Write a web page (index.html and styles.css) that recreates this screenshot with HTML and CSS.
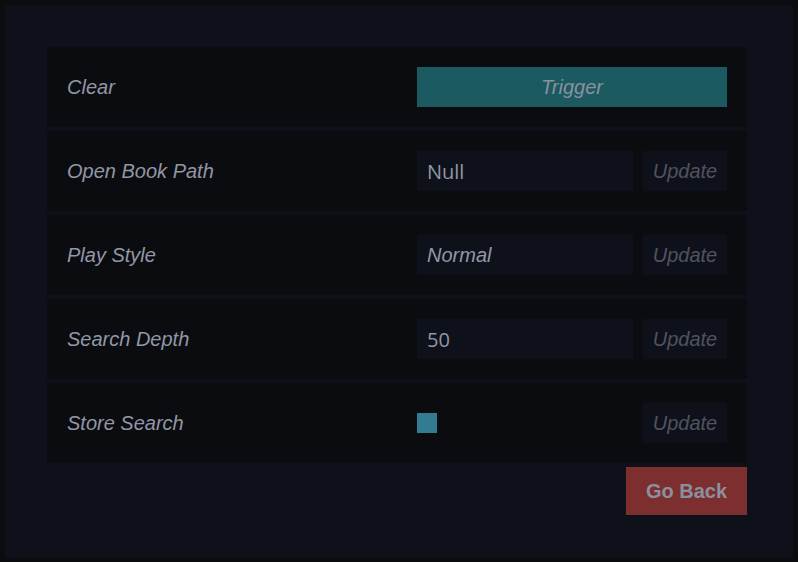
FILE: index.html
```html
<!DOCTYPE html>
<html>
<head>
<meta charset="utf-8">
<link rel="stylesheet" href="styles.css">
</head>
<body>
<div class="frame">
  <div class="panel">
    <div class="list">
      <div class="row">
        <span class="label">Clear</span>
        <div class="controls"><button class="trigger">Trigger</button></div>
      </div>
      <div class="row">
        <span class="label">Open Book Path</span>
        <div class="controls"><div class="field">Null</div><button class="update">Update</button></div>
      </div>
      <div class="row">
        <span class="label">Play Style</span>
        <div class="controls"><div class="field italic">Normal</div><button class="update">Update</button></div>
      </div>
      <div class="row">
        <span class="label">Search Depth</span>
        <div class="controls"><div class="field">50</div><button class="update">Update</button></div>
      </div>
      <div class="row">
        <span class="label">Store Search</span>
        <div class="controls"><div class="checkwrap"><span class="check"></span></div><button class="update">Update</button></div>
      </div>
    </div>
    <div class="footer"><button class="back">Go Back</button></div>
  </div>
</div>
</body>
</html>
```
FILE: styles.css
```css
html, body { margin: 0; padding: 0; background: #0b0c10; }
.frame { width: 798px; height: 562px; box-sizing: border-box; padding: 5px; background: #0b0c10; }
.panel { height: 100%; box-sizing: border-box; background: #0f111a; padding: 42px 46px 0 42px; }
.list { display: flex; flex-direction: column; gap: 4px; }
.row { height: 80px; box-sizing: border-box; background: #0b0c10; display: flex; align-items: center; justify-content: space-between; padding: 0 20px; }
.label { font-family: "Liberation Sans", Arial, sans-serif; font-style: italic; font-size: 20px; color: #9197a6; }
.controls { width: 310px; display: flex; gap: 10px; align-items: center; }
button { border: none; margin: 0; padding: 0; cursor: pointer; }
.trigger { width: 310px; height: 40px; background: #1b5a60; color: #8b909f; font-family: "Liberation Sans", Arial, sans-serif; font-style: italic; font-size: 20px; }
.field { width: 216px; height: 40px; box-sizing: border-box; background: #0f111a; padding: 0 10px; display: flex; align-items: center; font-family: "Open Sans", sans-serif; font-size: 20px; color: #9197a6; }
.field.italic { font-style: italic; font-family: "Liberation Sans", Arial, sans-serif; }
.checkwrap { width: 216px; height: 40px; display: flex; align-items: center; }
.check { width: 20px; height: 20px; background: #337a93; display: block; }
.update { width: 84px; height: 40px; background: #0f111a; color: #4f5360; font-family: "Liberation Sans", Arial, sans-serif; font-style: italic; font-size: 20px; }
.footer { display: flex; justify-content: flex-end; margin-top: 4px; }
.back { width: 121px; height: 48px; background: #7d2f2f; color: #8b909f; font-family: "Liberation Sans", Arial, sans-serif; font-weight: bold; font-size: 20px; }
```
